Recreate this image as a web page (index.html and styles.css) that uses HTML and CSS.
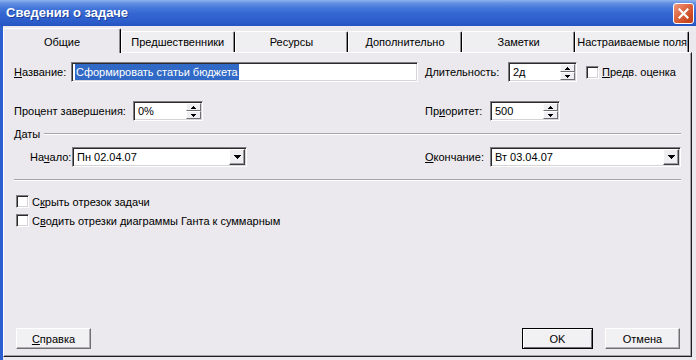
FILE: index.html
```html
<!DOCTYPE html>
<html lang="ru">
<head>
    <meta charset="UTF-8">
    <title>Сведения о задаче</title>
    <link rel="stylesheet" href="styles.css">
</head>
<body>
    <div class="window">
        <div class="titlebar">
            <span class="title">Сведения о задаче</span>
            <span class="close">
                <svg width="11" height="11" viewBox="0 0 11 11">
                    <path d="M1.5 1.5 L9.5 9.5 M9.5 1.5 L1.5 9.5" stroke="#fff" stroke-width="2.2" stroke-linecap="square"/>
                </svg>
            </span>
        </div>
        <div class="client">
            <div class="tabs">
                <div class="tab active">Общие</div>
                <div class="tab">Предшественники</div>
                <div class="tab">Ресурсы</div>
                <div class="tab">Дополнительно</div>
                <div class="tab">Заметки</div>
                <div class="tab">Настраиваемые поля</div>
            </div>
            <div class="page">
                <div class="row">
                    <div class="cell">
                        <label class="lbl w57"><u>Н</u>азвание:</label>
                        <div class="field w347"><span class="sel">Сформировать статьи бюджета</span></div>
                    </div>
                    <div class="cell">
                        <label class="lbl w83"><u>Д</u>лительность:</label>
                        <div class="field spin w69">
                            <span class="val">2д</span>
                            <span class="spinbtns">
                                <span class="sbtn"><svg width="5" height="3"><path d="M2 0h1v1h1v1h1v1H0V2h1V1h1z"/></svg></span>
                                <span class="sbtn"><svg width="5" height="3"><path d="M0 0h5v1H4v1H3v1H2V2H1V1H0z"/></svg></span>
                            </span>
                        </div>
                        <span class="check chk-est"></span>
                        <span class="chk-text"><u>П</u>редв. оценка</span>
                    </div>
                </div>

                <div class="row row2">
                    <div class="cell">
                        <label class="lbl w119">Процент завершения:</label>
                        <div class="field spin w70">
                            <span class="val">0%</span>
                            <span class="spinbtns">
                                <span class="sbtn"><svg width="5" height="3"><path d="M2 0h1v1h1v1h1v1H0V2h1V1h1z"/></svg></span>
                                <span class="sbtn"><svg width="5" height="3"><path d="M0 0h5v1H4v1H3v1H2V2H1V1H0z"/></svg></span>
                            </span>
                        </div>
                    </div>
                    <div class="cell">
                        <label class="lbl w65">Пр<u>и</u>оритет:</label>
                        <div class="field spin w70">
                            <span class="val">500</span>
                            <span class="spinbtns">
                                <span class="sbtn"><svg width="5" height="3"><path d="M2 0h1v1h1v1h1v1H0V2h1V1h1z"/></svg></span>
                                <span class="sbtn"><svg width="5" height="3"><path d="M0 0h5v1H4v1H3v1H2V2H1V1H0z"/></svg></span>
                            </span>
                        </div>
                    </div>
                </div>

                <div class="group-head">
                    <span>Даты</span>
                    <span class="group-line"></span>
                </div>

                <div class="row row3">
                    <div class="cell indent">
                        <label class="lbl w42">На<u>ч</u>ало:</label>
                        <div class="field combo w175">
                            <span class="val">Пн 02.04.07</span>
                            <span class="dropbtn"><svg width="7" height="4"><path d="M0 0h7v1H6v1H5v1H4v1H3V3H2V2H1V1H0z"/></svg></span>
                        </div>
                    </div>
                    <div class="cell">
                        <label class="lbl w65"><u>О</u>кончание:</label>
                        <div class="field combo grow">
                            <span class="val">Вт 03.04.07</span>
                            <span class="dropbtn"><svg width="7" height="4"><path d="M0 0h7v1H6v1H5v1H4v1H3V3H2V2H1V1H0z"/></svg></span>
                        </div>
                    </div>
                </div>

                <div class="separator"></div>

                <div class="checks">
                    <div class="check-row">
                        <span class="check"></span>
                        <span class="chk-text">С<u>к</u>рыть отрезок задачи</span>
                    </div>
                    <div class="check-row">
                        <span class="check"></span>
                        <span class="chk-text">С<u>в</u>одить отрезки диаграммы Ганта к суммарным</span>
                    </div>
                </div>

                <div class="buttons">
                    <button class="btn help"><u>С</u>правка</button>
                    <button class="btn ok default">OK</button>
                    <button class="btn cancel">Отмена</button>
                </div>
            </div>
        </div>
    </div>
</body>
</html>
```

FILE: styles.css
```css
* {
    margin: 0;
    padding: 0;
    box-sizing: border-box;
}

body {
    width: 696px;
    height: 360px;
    overflow: hidden;
    background: #ebe9ed;
    font-family: 'Liberation Sans', Arial, sans-serif;
    font-size: 11px;
    color: #000;
}

u {
    text-decoration: underline;
    text-underline-offset: 1px;
}

.window {
    width: 696px;
    height: 360px;
    display: flex;
    flex-direction: column;
}

/* title bar */
.titlebar {
    height: 26px;
    flex: 0 0 26px;
    display: flex;
    align-items: center;
    justify-content: space-between;
    padding: 0 2px 2px 6px;
    background: linear-gradient(#8fb4ee 0, #6491e2 3px, #4576da 8px, #3466d2 14px, #2c5cca 22px, #2553c2 26px);
}

.title {
    color: #fff;
    font-weight: bold;
    font-size: 13px;
    text-shadow: 1px 1px 0 #1b3f9a;
}

.close {
    width: 21px;
    height: 21px;
    margin-top: 2px;
    border: 1px solid #fff;
    border-radius: 3px;
    background: linear-gradient(135deg, #ee9a7e 0, #df6a45 40%, #cc4a22 75%, #c2401a 100%);
    display: flex;
    align-items: center;
    justify-content: center;
}

/* client area */
.client {
    flex: 1;
    border-left: 3px solid #2d5fd0;
    padding-top: 2px;
    display: flex;
    flex-direction: column;
}

.tabs {
    display: flex;
    align-items: flex-end;
    height: 24px;
    width: 686px;
}

.tab {
    flex: 1;
    height: 21px;
    padding-top: 3px;
    text-align: center;
    line-height: 14px;
    background: #efeef1;
    border-top: 1px solid #fff;
    border-left: 1px solid #fff;
    border-right: 1px solid #000;
    border-radius: 2px 2px 0 0;
    box-shadow: inset -1px 0 0 #8d8c91;
    white-space: nowrap;
}

.tab.active {
    flex: 0 0 118px;
    height: 25px;
    margin-bottom: -1px;
    padding-top: 6px;
    position: relative;
    z-index: 1;
    background: #ebe9ed;
}

.page {
    width: 689px;
    height: 305px;
    border-top: 1px solid #fff;
    border-left: 1px solid #fff;
    border-right: 1px solid #1e1e1e;
    border-bottom: 1px solid #1e1e1e;
    box-shadow: inset -1px -1px 0 #a3a2a7;
    padding: 9px 10px 7px 10px;
    display: flex;
    flex-direction: column;
}

/* rows */
.row {
    display: grid;
    grid-template-columns: 411px 1fr;
    height: 20px;
}

.row2 {
    margin-top: 19px;
}

.row3 {
    margin-top: 6px;
}

.cell {
    display: flex;
    align-items: center;
}

.cell.indent {
    padding-left: 16px;
}

.lbl {
    flex: none;
    white-space: nowrap;
}

.w42 { width: 42px; }
.w57 { width: 57px; }
.w65 { width: 65px; }
.w83 { width: 83px; }
.w119 { width: 119px; }

/* sunken fields */
.field {
    position: relative;
    height: 20px;
    background: #fff;
    border: 1px solid;
    border-color: #7f7e83 #fff #fff #7f7e83;
    box-shadow: inset 1px 1px 0 #2a2a2a, inset -1px -1px 0 #d6d4d9;
    display: flex;
    align-items: center;
    padding-left: 3px;
    flex: none;
}

.w69 { width: 69px; }
.w70 { width: 70px; }
.w175 { width: 175px; }
.w347 { width: 347px; }
.grow { flex: 1; }

.val {
    flex: 1;
    white-space: nowrap;
    padding-left: 1px;
}

.sel {
    background: #3169c6;
    color: #fff;
    line-height: 16px;
    padding: 0 1px;
}

.spinbtns {
    align-self: stretch;
    width: 15px;
    margin: 1px 1px 1px 0;
    display: flex;
    flex-direction: column;
}

.sbtn {
    flex: 1;
    display: flex;
    align-items: center;
    justify-content: center;
    background: #efeef1;
    border-top: 1px solid #fff;
    border-left: 1px solid #fff;
    border-right: 1px solid #6f6e73;
    border-bottom: 1px solid #6f6e73;
}

.dropbtn {
    align-self: stretch;
    width: 16px;
    margin: 1px 1px 1px 0;
    display: flex;
    align-items: center;
    justify-content: center;
    background: #efeef1;
    border-top: 1px solid #fff;
    border-left: 1px solid #fff;
    border-right: 1px solid #404040;
    border-bottom: 1px solid #404040;
    box-shadow: inset -1px -1px 0 #9c9ba0;
}

/* checkboxes */
.check {
    flex: none;
    width: 13px;
    height: 13px;
    background: #fff;
    border: 1px solid;
    border-color: #7f7e83 #fff #fff #7f7e83;
    box-shadow: inset 1px 1px 0 #2a2a2a, inset -1px -1px 0 #d6d4d9;
}

.chk-est {
    margin-left: 9px;
}

.chk-text {
    margin-left: 3px;
    white-space: nowrap;
}

/* group */
.group-head {
    margin-top: 6px;
    height: 14px;
    display: flex;
    align-items: center;
}

.group-line {
    flex: 1;
    margin-left: 4px;
    border-top: 1px solid #a7a6ab;
    border-bottom: 1px solid #fff;
}

.separator {
    margin-top: 12px;
    border-top: 1px solid #a7a6ab;
    border-bottom: 1px solid #fff;
}

.checks {
    margin-top: 11px;
    padding-left: 2px;
}

.check-row {
    height: 19px;
    display: flex;
    align-items: center;
}

/* buttons */
.buttons {
    margin-top: auto;
    display: flex;
    height: 21px;
}

.btn {
    font-family: 'Liberation Sans', Arial, sans-serif;
    font-size: 11px;
    color: #000;
    height: 21px;
    background: #f1f0f3;
    border: 1px solid;
    border-color: #fff #6f6e73 #6f6e73 #fff;
    box-shadow: inset -1px -1px 0 #b0afb4;
}

.btn.default {
    border: 1px solid #000;
    box-shadow: inset 1px 1px 0 #fff, inset -1px -1px 0 #6f6e73;
}

.help {
    width: 75px;
    margin-left: 2px;
}

.ok {
    width: 71px;
    margin-left: auto;
}

.cancel {
    width: 75px;
    margin-left: 12px;
    margin-right: 1px;
}
```
